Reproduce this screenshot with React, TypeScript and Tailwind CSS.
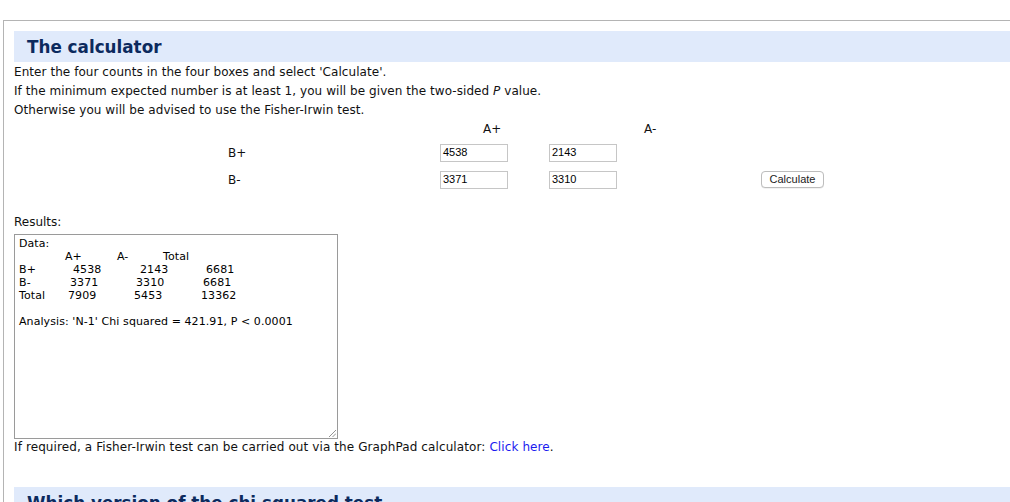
import React from "react";

const verdana = "font-['DejaVu_Sans',Verdana,sans-serif]";

function NumInput({ value }: { value: string }) {
  return (
    <div className="w-[68px] h-[18px] border border-[#c6c6c6] bg-white flex items-center pl-[2px] font-['Liberation_Sans',Arial,sans-serif] text-[11px] text-black leading-none">
      {value}
    </div>
  );
}

export default function App() {
  const rows: [string, string, string, string][] = [
    ["B+", "4538", "2143", "6681"],
    ["B-", "3371", "3310", "6681"],
    ["Total", "7909", "5453", "13362"],
  ];
  return (
    <div className={`w-[1010px] h-[502px] overflow-hidden bg-white pl-[3px] pt-[20px] ${verdana} text-[#111]`}>
      <div className="border-l border-t border-[#b4b4b4] pl-[10px] pt-[10px] h-[600px]">
        <div className="h-[31px] bg-[#e0eafb] flex items-center pl-[13px]">
          <h2 className="text-[16.8px] font-bold text-[#0c2a5e] leading-none pt-[1px]">The calculator</h2>
        </div>
        <div className="text-[12px] leading-[19px] pt-[1px] tracking-[0.06px]">
          <p>Enter the four counts in the four boxes and select 'Calculate'.</p>
          <p>
            If the minimum expected number is at least 1, you will be given the two-sided <i>P</i> value.
          </p>
          <p>Otherwise you will be advised to use the Fisher-Irwin test.</p>
        </div>

        <div className="grid grid-cols-[214px_212px_109px_212px_auto] text-[12px] -mt-[1px]">
          <div className="h-[20px]" />
          <div />
          <div className="pl-[43px] leading-[20px]">A+</div>
          <div className="pl-[95px] leading-[20px]">A-</div>
          <div />

          <div className="h-[27px]" />
          <div className="flex items-center">B+</div>
          <div className="flex items-center"><NumInput value="4538" /></div>
          <div className="flex items-center"><NumInput value="2143" /></div>
          <div />

          <div className="h-[27px]" />
          <div className="flex items-center">B-</div>
          <div className="flex items-center"><NumInput value="3371" /></div>
          <div className="flex items-center"><NumInput value="3310" /></div>
          <div className="flex items-center">
            <button className="w-[63px] h-[17px] rounded-[4px] border border-[#bdbdbd] bg-white font-['Liberation_Sans',Arial,sans-serif] text-[11px] text-[#222] leading-none flex items-center justify-center shadow-[0_0.5px_0.5px_rgba(0,0,0,0.1)]">
              Calculate
            </button>
          </div>
        </div>

        <div className="mt-[20px] text-[12px] leading-[19px]">Results:</div>
        <div className="relative mt-[2px] w-[324px] h-[205px] border border-[#9a9a9a] bg-white pt-[2px] pl-[4px] text-[11px] leading-[13px] text-black tracking-[0.08px]">
          <div>Data:</div>
          <div className="flex">
            <span className="w-[46px]" />
            <span className="w-[52px]">A+</span>
            <span className="w-[46px]">A-</span>
            <span>Total</span>
          </div>
          {rows.map((r, i) => (
            <div className="flex" key={r[0]}>
              <span className={i === 0 ? "w-[54px]" : i === 1 ? "w-[51px]" : "w-[49px]"}>{r[0]}</span>
              <span className={i === 0 ? "w-[67px]" : "w-[66px]"}>{r[1]}</span>
              <span className={i === 0 ? "w-[66px]" : "w-[67px]"}>{r[2]}</span>
              <span>{r[3]}</span>
            </div>
          ))}
          <div className="h-[13px]" />
          <div>Analysis: 'N-1' Chi squared = 421.91, P &lt; 0.0001</div>
          <svg className="absolute right-[1px] bottom-[1px]" width="8" height="8" viewBox="0 0 8 8">
            <line x1="1" y1="8" x2="8" y2="1" stroke="#777" strokeWidth="0.8" />
            <line x1="4.5" y1="8" x2="8" y2="4.5" stroke="#777" strokeWidth="0.8" />
          </svg>
        </div>
        <div className="text-[12px] leading-[17px] h-[17px] tracking-[0.1px]">
          If required, a Fisher-Irwin test can be carried out via the GraphPad calculator:{" "}
          <a className="text-[#1a1aef]">Click here</a>.
        </div>

        <div className="mt-[31px] h-[31px] bg-[#e0eafb] flex items-center pl-[13px]">
          <h2 className="text-[16.8px] font-bold text-[#0c2a5e] leading-none pt-[1px]">Which version of the chi squared test</h2>
        </div>
      </div>
    </div>
  );
}
